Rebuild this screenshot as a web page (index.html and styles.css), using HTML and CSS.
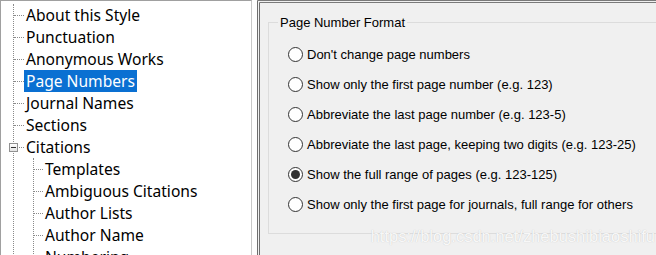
FILE: index.html
```html
<!DOCTYPE html>
<html>
  <head>
    <title>Output Style - Page Numbers</title>
    <link rel="stylesheet" href="styles.css">
  </head>
  <body>
    <div class="tree">
      <ul class="nodes">
        <li class="row"><span class="branch"></span><span class="label">About this Style</span></li>
        <li class="row"><span class="branch"></span><span class="label">Punctuation</span></li>
        <li class="row"><span class="branch"></span><span class="label">Anonymous Works</span></li>
        <li class="row"><span class="branch"></span><span class="label selected">Page Numbers</span></li>
        <li class="row"><span class="branch"></span><span class="label">Journal Names</span></li>
        <li class="row"><span class="branch"></span><span class="label">Sections</span></li>
        <li>
          <div class="row"><span class="branch"><span class="toggle"></span></span><span class="label">Citations</span></div>
          <ul class="nodes child">
            <li class="row"><span class="branch"></span><span class="label">Templates</span></li>
            <li class="row"><span class="branch"></span><span class="label">Ambiguous Citations</span></li>
            <li class="row"><span class="branch"></span><span class="label">Author Lists</span></li>
            <li class="row"><span class="branch"></span><span class="label">Author Name</span></li>
            <li class="row"><span class="branch"></span><span class="label">Numbering</span></li>
          </ul>
        </li>
      </ul>
    </div>
    <div class="splitter"></div>
    <div class="pane">
      <fieldset class="group">
        <legend>Page Number Format</legend>
        <label class="option"><span class="radio"></span>Don't change page numbers</label>
        <label class="option"><span class="radio"></span>Show only the first page number (e.g. 123)</label>
        <label class="option"><span class="radio"></span>Abbreviate the last page number (e.g. 123-5)</label>
        <label class="option"><span class="radio"></span>Abbreviate the last page, keeping two digits (e.g. 123-25)</label>
        <label class="option"><span class="radio checked"></span>Show the full range of pages (e.g. 123-125)</label>
        <label class="option"><span class="radio"></span>Show only the first page for journals, full range for others</label>
      </fieldset>
      <div class="watermark">https://blog.csdn.net/zhebushibiaoshifu</div>
    </div>
  </body>
</html>
```

FILE: styles.css
```css
html, body {
  margin: 0;
  height: 100%;
  overflow: hidden;
}
body {
  display: flex;
  background-color: #f0f0f0;
}
.tree {
  width: 252px;
  flex-shrink: 0;
  overflow: hidden;
  background-color: #fff;
  border-left: 1px solid #a0a0a0;
  border-top: 1px solid #a0a0a0;
  border-right: 1px solid #c8c8c8;
  font-family: "Noto Sans", sans-serif;
  font-size: 15.6px;
  color: #000;
  padding-top: 3px;
  box-sizing: border-box;
}
.nodes {
  list-style: none;
  margin: 0 0 0 12px;
  padding: 0;
  border-left: 1px dotted #8a8a8a;
}
.nodes.child {
  margin-left: 19px;
}
.row {
  display: flex;
  align-items: center;
  height: 22px;
}
.branch {
  display: flex;
  align-items: center;
  width: 10px;
  height: 0;
  border-top: 1px dotted #8a8a8a;
  flex-shrink: 0;
}
.child .branch {
  width: 9px;
}
.toggle {
  width: 7px;
  height: 7px;
  margin-left: -5px;
  border: 1px solid #919191;
  background: linear-gradient(#fff, #e4e4e4);
  display: flex;
  align-items: center;
  justify-content: center;
}
.toggle::after {
  content: "";
  width: 5px;
  height: 1px;
  background-color: #333;
}
.label {
  padding: 0 2px;
  line-height: 22px;
  white-space: nowrap;
}
.selected {
  background-color: #0a70d2;
  color: #fff;
}
.splitter {
  width: 5px;
  flex-shrink: 0;
  background-color: #fdfdfd;
}
.pane {
  flex: 1;
  border-left: 3px double #6e6e6e;
  border-top: 3px double #7a7a7a;
  padding: 12px 0 0 8px;
  position: relative;
  font-family: "Liberation Sans", sans-serif;
  font-size: 13px;
  color: #000;
}
.group {
  margin: 0 -20px 0 0;
  padding: 9px 0 14px 19px;
  border: 1px solid #dcdcdc;
  display: flex;
  flex-direction: column;
}
.group legend {
  padding: 0 2px;
  margin-left: -10px;
  line-height: 15px;
}
.option {
  display: flex;
  align-items: center;
  height: 30px;
}
.radio {
  width: 13px;
  height: 13px;
  border: 1px solid #333;
  border-radius: 50%;
  background-color: #fff;
  margin-right: 4px;
  display: flex;
  align-items: center;
  justify-content: center;
}
.radio.checked::after {
  content: "";
  width: 9px;
  height: 9px;
  border-radius: 50%;
  background-color: #333;
}
.watermark {
  position: absolute;
  right: 1px;
  bottom: 9px;
  font-size: 16.5px;
  color: rgba(255, 255, 255, 0.9);
  text-shadow: 0 0 1px #bdbdbd;
}
```
